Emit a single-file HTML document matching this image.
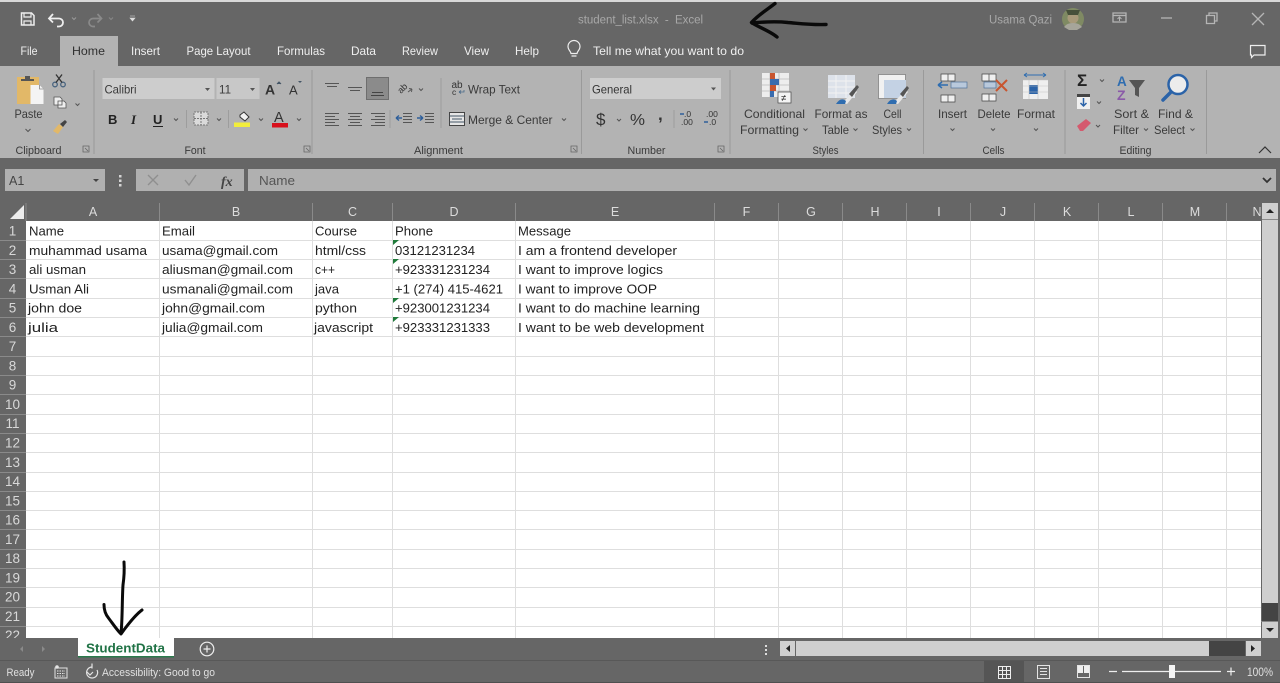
<!DOCTYPE html>
<html><head><meta charset="utf-8"><title>student_list.xlsx - Excel</title>
<style>
html,body{margin:0;padding:0;background:#666;width:1280px;height:683px;overflow:hidden}
svg{display:block;filter:blur(.3px)}
text{font-family:"Liberation Sans",sans-serif;white-space:pre}
.c text{font-size:13px;fill:#222}
.r text{font-size:11.7px;fill:#3a3a3a}
.l text{font-size:10.6px;fill:#3a3a3a}
.t text{font-size:12px;fill:#efefef}
.h text{font-size:12.5px;fill:#dcdcdc;text-anchor:middle}
.n text{font-size:13.5px;fill:#d8d8d8;text-anchor:middle}
.ch{fill:none;stroke:#555;stroke-width:1}
</style></head><body>
<svg width="1280" height="683" viewBox="0 0 1280 683" xmlns="http://www.w3.org/2000/svg">
<rect width="1280" height="683" fill="#666"/>
<rect width="1280" height="2" fill="#d8d8d8"/>

<!-- Title bar -->
<g fill="none" stroke="#eee" stroke-width="1.5">
<path d="M21.500 13h10l2.500 2.500v9.500h-12.500z"/><path d="M24 13v4h7v-4M24 25v-4h7v4" stroke-width="1.200"/>
<path d="M50 18.500h9a4 4 0 0 1 0 8h-2" stroke-width="1.800"/><path d="M53 14l-4 4.500 4 4" stroke-width="1.800"/>
</g>
<path d="M72 17.500l2 2 2-2" fill="none" stroke="#999"/>
<g fill="none" stroke="#8a8a8a" stroke-width="1.700"><path d="M101 18.500h-8a4 4 0 0 0 0 8h2"/><path d="M97.500 14l4 4.500-4 4"/></g>
<path d="M109 17.500l2 2 2-2" fill="none" stroke="#888"/>
<path d="M130 16h5M130 18h5l-2.500 3z" fill="#ddd" stroke="#ddd" stroke-width=".6"/>
<text x="578" y="23.500" font-size="11.500" fill="#a8a8a8" textLength="125" lengthAdjust="spacing">student_list.xlsx  -  Excel</text>
<text x="989" y="23.500" font-size="11.500" fill="#a8a8a8" textLength="63" lengthAdjust="spacingAndGlyphs">Usama Qazi</text>
<circle cx="1073" cy="19" r="11" fill="#7f8a63"/>
<circle cx="1073" cy="18" r="5.500" fill="#a89a7a"/><path d="M1064 27a10 7 0 0 1 18 0l-5 3h-8z" fill="#a6a59a"/><path d="M1066 10h14l-2 5h-10z" fill="#47513a"/>
<g fill="none" stroke="#b5b5b5" stroke-width="1.300">
<path d="M1113 13h13v9h-13z"/><path d="M1113 15.500h13"/><path d="M1119.500 21v-4m-2 2l2-2 2 2" stroke-width="1"/>
<path d="M1161 18h11"/>
<path d="M1206.500 15.500h8v8h-8z"/><path d="M1209 15.500v-2.500h8v8h-2.500"/>
<path d="M1252 13l12 12M1264 13l-12 12"/>
</g>

<!-- Tabs -->
<rect x="60" y="36" width="58" height="30" fill="#b3b3b3"/>
<g class="t">
<text x="20.500" y="55" textLength="17" lengthAdjust="spacingAndGlyphs">File</text>
<text x="72" y="55" textLength="33" lengthAdjust="spacingAndGlyphs" style="fill:#303030">Home</text>
<text x="131" y="55" textLength="29" lengthAdjust="spacingAndGlyphs">Insert</text>
<text x="186.500" y="55" textLength="64" lengthAdjust="spacingAndGlyphs">Page Layout</text>
<text x="277" y="55" textLength="48" lengthAdjust="spacingAndGlyphs">Formulas</text>
<text x="351" y="55" textLength="25" lengthAdjust="spacingAndGlyphs">Data</text>
<text x="402" y="55" textLength="36" lengthAdjust="spacingAndGlyphs">Review</text>
<text x="464" y="55" textLength="25" lengthAdjust="spacingAndGlyphs">View</text>
<text x="515" y="55" textLength="24" lengthAdjust="spacingAndGlyphs">Help</text>
<text x="593" y="55" textLength="151" lengthAdjust="spacingAndGlyphs">Tell me what you want to do</text>
</g>
<path d="M571 53.500c0-2-3-3.500-3-7a6 6 0 0 1 12 0c0 3.500-3 5-3 7zM571.500 56h5" fill="none" stroke="#eee" stroke-width="1.200"/>
<path d="M1250.500 45.500h14.500v9.500h-11l-2.500 2.500v-2.500h-1z" fill="none" stroke="#eee" stroke-width="1.200"/>

<!-- Ribbon -->
<rect x="0" y="66" width="1280" height="92" fill="#b3b3b3"/>
<g stroke="#9a9a9a" stroke-width="1"><path d="M94 70v84M312 70v84M581.500 70v84M730 70v84M923.500 70v84M1065 70v84M1206.500 70v84"/></g>

<!-- Clipboard -->
<rect x="17" y="77" width="22" height="27" fill="#e2b868"/>
<path d="M21 79h4v-3h5v3h4v2h-13z" fill="#555"/>
<path d="M30.500 85h9l4 4v15h-13z" fill="#f4f4f4"/><path d="M39.500 85v4h4" fill="none" stroke="#888" stroke-width=".8"/>
<g fill="none" stroke="#4a6580" stroke-width="1.300"><circle cx="55" cy="84.500" r="2.300"/><circle cx="63" cy="84.500" r="2.300"/></g><path d="M56 82.500l6-8M62 82.500l-6-8" stroke="#333" stroke-width="1.300"/>
<path d="M54 97h6l2 2v6h-8z M58 101h6l2 2v5h-8z" fill="#eee" stroke="#555" stroke-width=".8"/>
<path d="M75.500 103.500l2 2 2-2" class="ch"/>
<path d="M53 131l6-7 4 3-5 7z" fill="#e2b868"/><path d="M60 124l5-4 2 2-4 5z" fill="#444"/>
<g class="r"><text x="14.500" y="118" textLength="28" lengthAdjust="spacingAndGlyphs">Paste</text></g>
<g class="l">
<text x="15.500" y="154" textLength="46" lengthAdjust="spacingAndGlyphs">Clipboard</text>
<text x="184.500" y="154" textLength="21" lengthAdjust="spacingAndGlyphs">Font</text>
<text x="414" y="154" textLength="49" lengthAdjust="spacingAndGlyphs">Alignment</text>
<text x="627.500" y="154" textLength="38" lengthAdjust="spacingAndGlyphs">Number</text>
<text x="812.500" y="154" textLength="26" lengthAdjust="spacingAndGlyphs">Styles</text>
<text x="982.500" y="154" textLength="22" lengthAdjust="spacingAndGlyphs">Cells</text>
<text x="1119.500" y="154" textLength="32" lengthAdjust="spacingAndGlyphs">Editing</text>
</g>
<path d="M25.500 129l2.500 2.500 2.500-2.500" class="ch"/>
<g fill="none" stroke="#666" stroke-width=".8"><path d="M83 146h6v6h-6z M85 148l3 3"/><path d="M304 146h6v6h-6z M306 148l3 3"/><path d="M571 146h6v6h-6z M573 148l3 3"/><path d="M718 146h6v6h-6z M720 148l3 3"/></g>

<!-- Font -->
<rect x="102.500" y="78" width="112" height="21" fill="#cdcdcd"/>
<rect x="216.500" y="78" width="43" height="21" fill="#c8c8c8"/>
<g class="r"><text x="104.500" y="93.500" textLength="32" lengthAdjust="spacingAndGlyphs">Calibri</text><text x="219" y="93.500" textLength="12" lengthAdjust="spacingAndGlyphs">11</text></g>
<path d="M205 88h5l-2.500 3zM250 88h5l-2.500 3z" fill="#555"/>
<text x="265" y="94.500" font-size="14" font-weight="bold" fill="#333">A</text><path d="M277 84l2-2 2 2" fill="#456" stroke="#456"/>
<text x="289" y="94.500" font-size="13" fill="#333">A</text><path d="M298 81h4l-2 2z" fill="#456"/>
<text x="108" y="124" font-size="13" font-weight="bold" fill="#222">B</text>
<text x="131" y="124" font-size="13" font-weight="bold" font-style="italic" fill="#222" style="font-family:'Liberation Serif',serif">I</text>
<text x="153" y="124" font-size="13" font-weight="bold" fill="#222">U</text><path d="M153 126.500h10" stroke="#222" stroke-width="1"/>
<path d="M174 118.500l2 2 2-2M217 118.500l2 2 2-2M259 118.500l2 2 2-2M297 118.500l2 2 2-2" class="ch"/>
<path d="M186.500 110v18M228.500 110v18" stroke="#9d9d9d"/>
<rect x="194" y="112" width="14" height="13" fill="#dadada"/><path d="M194 112h14v13h-14zM201 112v13M194 118.500h14" fill="none" stroke="#777" stroke-width="1" stroke-dasharray="2 1"/>
<path d="M240 115l4-3 5 5-4 4-5-4z" fill="#f2f2f2" stroke="#333" stroke-width="1"/>
<rect x="234" y="122.500" width="16" height="4.500" fill="#f2ee3c"/>
<text x="274" y="122" font-size="14.500" fill="#333">A</text>
<rect x="272" y="123" width="16" height="4.500" fill="#d8101c"/>

<!-- Alignment -->
<g fill="none" stroke="#555" stroke-width="1">
<path d="M325 83.500h14M327 86.500h10"/><path d="M348 87.500h14M350 90.500h10"/>
<path d="M325 113.500h14M325 116.500h10M325 119.500h14M325 122.500h10M325 125.500h14"/>
<path d="M348 113.500h14M350 116.500h10M348 119.500h14M350 122.500h10M348 125.500h14"/>
<path d="M371 113.500h14M375 116.500h10M371 119.500h14M375 122.500h10M371 125.500h14"/>
<path d="M403 113.500h9M403 116.500h9M403 119.500h9M403 122.500h9"/><path d="M425 113.500h9M425 116.500h9M425 119.500h9M425 122.500h9"/>
<path d="M390 110v18M441 78v50" stroke="#9d9d9d"/>
<path d="M419 88.500l2 2 2-2"/>
</g>
<text x="0" y="0" font-size="9" fill="#333" transform="translate(401 94) rotate(-45)">ab</text>
<path d="M408 92l4-3M412 89l-3-.5M412 89l-.5 3" stroke="#555" fill="none" stroke-width=".9"/>
<rect x="366.500" y="77.500" width="22" height="22" fill="#8b8b8b" stroke="#6e6e6e"/>
<path d="M372 92.500h11M371 95.500h13" stroke="#444"/>
<path d="M396 118h6M396 118l3-2.500M396 118l3 2.500" stroke="#2f5f9a" stroke-width="1.400" fill="none"/>
<path d="M417 118h6M423 118l-3-2.500M423 118l-3 2.500" stroke="#2f5f9a" stroke-width="1.400" fill="none"/>

<text x="451.500" y="88" font-size="10" fill="#333">ab</text><text x="452" y="95" font-size="8.500" fill="#333">c</text><path d="M459 92h5v-2M459 92l2-1.500M459 92l2 1.500" stroke="#4a6b8a" fill="none" stroke-width=".8"/>
<g class="r"><text x="468" y="93.500" textLength="52" lengthAdjust="spacingAndGlyphs">Wrap Text</text><text x="468" y="124" textLength="84.500" lengthAdjust="spacingAndGlyphs">Merge &amp; Center</text></g>
<rect x="449.500" y="112.500" width="15" height="13" fill="#e6e6e6" stroke="#444"/><path d="M449.500 116h15M449.500 122h15M452 119h10" stroke="#456" fill="none" stroke-width=".9"/>
<path d="M562 118.500l2 2 2-2" class="ch"/>

<!-- Number -->
<rect x="590" y="78" width="131" height="21" fill="#cdcdcd"/>
<text x="592" y="93.500" font-size="11.700" fill="#333" textLength="40" lengthAdjust="spacingAndGlyphs">General</text>
<path d="M711 87.500h5l-2.500 3z" fill="#555"/>
<text x="596" y="125" font-size="17" fill="#333">$</text>
<path d="M617 119l2 2 2-2" class="ch"/>
<text x="630" y="125" font-size="16" fill="#333" textLength="15" lengthAdjust="spacingAndGlyphs">%</text>
<text x="658" y="120" font-size="17" font-weight="bold" fill="#333">,</text>
<path d="M674 110v18" stroke="#9d9d9d"/>
<g font-size="8.500" fill="#333"><text x="684" y="117">.0</text><text x="681" y="125">.00</text><text x="706" y="117">.00</text><text x="709" y="125">.0</text></g>
<path d="M680 114h4M704 122h4" stroke="#2f5f9a" stroke-width="1.500"/>

<!-- Styles -->
<rect x="762" y="73" width="27" height="24" fill="#ededed"/>
<path d="M762 79h27M762 85h27M762 91h27M770 73v24M779 73v24" stroke="#bbb" stroke-width=".8"/>
<rect x="770" y="73" width="5" height="6" fill="#c8552f"/><rect x="770" y="79" width="9" height="6" fill="#3a6cae"/><rect x="770" y="85" width="6" height="6" fill="#c8552f"/><rect x="770" y="91" width="4" height="6" fill="#3a6cae"/>
<rect x="778" y="92" width="13" height="11" fill="#f4f4f4" stroke="#444" stroke-width=".7"/><text x="781" y="101" font-size="9.500" fill="#222">≠</text>
<rect x="828" y="75" width="27" height="23" fill="#dde2ea"/><path d="M828 81h27M828 87h27M828 93h22M836 75v23M846 75v23" stroke="#f2f2f2" stroke-width="1"/>
<path d="M842 103l13-13 2 2-10 12z" fill="#e8e8e8"/><path d="M849 94l8-9 2 2-7 10z" fill="#555"/><path d="M836 104c3-5 7-6 10-3l-1 3z" fill="#2f6db0"/>
<rect x="878.500" y="74.500" width="27" height="24" fill="#f1f1f1" stroke="#777" stroke-width=".7"/><rect x="884" y="80" width="22" height="18" fill="#c4d2e4"/>
<path d="M893 103l13-13 2 2-10 12z" fill="#e8e8e8"/><path d="M900 94l7-8 2 2-6 9z" fill="#555"/><path d="M887 104c3-5 7-6 10-3l-1 3z" fill="#2f6db0"/>
<g class="r">
<text x="744" y="118" textLength="61" lengthAdjust="spacingAndGlyphs">Conditional</text>
<text x="740" y="134" textLength="59" lengthAdjust="spacingAndGlyphs">Formatting</text>
<text x="814.500" y="118" textLength="53" lengthAdjust="spacingAndGlyphs">Format as</text>
<text x="822" y="134" textLength="27" lengthAdjust="spacingAndGlyphs">Table</text>
<text x="883.500" y="118" textLength="18" lengthAdjust="spacingAndGlyphs">Cell</text>
<text x="872" y="134" textLength="30" lengthAdjust="spacingAndGlyphs">Styles</text>
</g>
<path d="M803.500 128.500l2 2 2-2M853.500 128.500l2 2 2-2M907 128.500l2 2 2-2" class="ch"/>

<!-- Cells -->
<g fill="#efefef" stroke="#444" stroke-width=".7"><path d="M941 74h14v7h-14z M941 95h14v7h-14z"/><path d="M982 74h14v7h-14z M982 94h14v7h-14z"/></g>
<path d="M948 74v7M948 95v7M989 74v7M989 94v7" stroke="#444" stroke-width=".7"/>
<rect x="951" y="82" width="16" height="6" fill="#b9c9dc" stroke="#4f7199" stroke-width=".7"/>
<path d="M938 85h10M938 85l4-3M938 85l4 3" stroke="#2f6db0" stroke-width="1.500" fill="none"/>
<rect x="984" y="82" width="12" height="6" fill="#b9c9dc" stroke="#4f7199" stroke-width=".7"/>
<path d="M996 80l11 11M1007 80l-11 11" stroke="#c8552f" stroke-width="2"/>
<rect x="1023" y="80" width="25" height="19" fill="#efefef"/><rect x="1029" y="85" width="9" height="9" fill="#2b63a8"/>
<path d="M1023 80h25M1023 86h25M1023 92h25M1029 80v19M1038 80v19" stroke="#c2c2c2" stroke-width=".6"/>
<path d="M1024 75h22M1024 75l3-2M1024 75l3 2M1046 75l-3-2M1046 75l-3 2" stroke="#2f6db0" fill="none"/>
<g class="r">
<text x="938" y="118" textLength="29" lengthAdjust="spacingAndGlyphs">Insert</text>
<text x="977.500" y="118" textLength="33" lengthAdjust="spacingAndGlyphs">Delete</text>
<text x="1017" y="118" textLength="38" lengthAdjust="spacingAndGlyphs">Format</text>
</g>
<path d="M950.500 128.500l2 2 2-2M991 128.500l2 2 2-2M1034 128.500l2 2 2-2" class="ch"/>

<!-- Editing -->
<text x="1077" y="86" font-size="17" font-weight="bold" fill="#222">Σ</text>
<path d="M1100 79.500l2 2 2-2M1097 101.500l2 2 2-2M1096 125l2 2 2-2M1144 128.500l2 2 2-2M1190.500 128.500l2 2 2-2" class="ch"/>
<rect x="1077" y="95" width="13" height="14" fill="#f0f0f0"/><rect x="1077" y="94" width="13" height="3" fill="#444"/>
<path d="M1083.500 98v8m-3-3l3 3 3-3" stroke="#2b63a8" stroke-width="1.500" fill="none"/>
<path d="M1077 126l9-7 5 4-8 8h-3z" fill="#d45a6e"/>
<text x="1117" y="86" font-size="13.500" font-weight="bold" fill="#2f6db0">A</text>
<text x="1117" y="100" font-size="14" font-weight="bold" fill="#8a5aa8">Z</text>
<path d="M1129 80h16l-6 8v9l-4-2v-7z" fill="#555"/>
<circle cx="1178" cy="84.500" r="9.500" fill="#ececec" stroke="#2b63a8" stroke-width="2.500"/>
<path d="M1171 92l-8 8" stroke="#2b63a8" stroke-width="3.500" stroke-linecap="round"/>
<g class="r">
<text x="1114" y="118" textLength="35" lengthAdjust="spacingAndGlyphs">Sort &amp;</text>
<text x="1113" y="134" textLength="26" lengthAdjust="spacingAndGlyphs">Filter</text>
<text x="1158" y="118" textLength="35" lengthAdjust="spacingAndGlyphs">Find &amp;</text>
<text x="1154" y="134" textLength="31" lengthAdjust="spacingAndGlyphs">Select</text>
</g>
<path d="M1259 153l6-6 6 6" fill="none" stroke="#333" stroke-width="1.200"/>

<!-- Formula bar -->
<rect x="5" y="169" width="100" height="22" fill="#b0b0b0"/>
<text x="9" y="185" font-size="12.500" fill="#444">A1</text>
<path d="M93 179h6l-3 3z" fill="#444"/>
<g fill="#d5d5d5"><rect x="119" y="175" width="2.500" height="2.500"/><rect x="119" y="179.500" width="2.500" height="2.500"/><rect x="119" y="184" width="2.500" height="2.500"/></g>
<rect x="136" y="169" width="108" height="22" fill="#b0b0b0"/>
<rect x="248" y="169" width="1028" height="22" fill="#b0b0b0"/>
<path d="M148 175l10 10M158 175l-10 10" stroke="#8f8f8f" stroke-width="1.400"/>
<path d="M185 180l4 5 7-10" stroke="#8f8f8f" stroke-width="1.400" fill="none"/>
<text x="221" y="186" font-size="14" font-style="italic" font-weight="bold" fill="#444" style="font-family:'Liberation Serif',serif">fx</text>
<text x="259" y="185" font-size="13" fill="#555" textLength="36" lengthAdjust="spacingAndGlyphs">Name</text>
<path d="M1263 178l4 4 4-4" fill="none" stroke="#333" stroke-width="1.800"/>

<!-- Grid -->
<rect x="26" y="221" width="1235" height="417" fill="#fff"/>
<path fill="none" stroke="#dedede" stroke-width="1" d="M26 240.500H1261M26 259.500H1261M26 278.500H1261M26 298.500H1261M26 317.500H1261M26 336.500H1261M26 356.500H1261M26 375.500H1261M26 394.500H1261M26 414.500H1261M26 433.500H1261M26 452.500H1261M26 472.500H1261M26 491.500H1261M26 510.500H1261M26 529.500H1261M26 549.500H1261M26 568.500H1261M26 587.500H1261M26 607.500H1261M26 626.500H1261"/>
<path fill="none" stroke="#dedede" stroke-width="1" d="M159.500 221V638M312.500 221V638M392.500 221V638M515.500 221V638M714.500 221V638M778.500 221V638M842.500 221V638M906.500 221V638M970.500 221V638M1034.500 221V638M1098.500 221V638M1162.500 221V638M1226.500 221V638"/>

<!-- Column headers -->
<path d="M26 203v18M159.500 203v18M312.500 203v18M392.500 203v18M515.500 203v18M714.500 203v18M778.500 203v18M842.500 203v18M906.500 203v18M970.500 203v18M1034.500 203v18M1098.500 203v18M1162.500 203v18M1226.500 203v18" stroke="#8a8a8a" fill="none"/>
<path d="M24 205v14H10z" fill="#ececec"/>
<g class="h">
<text x="93" y="216">A</text><text x="236" y="216">B</text><text x="352.500" y="216">C</text><text x="454" y="216">D</text><text x="615" y="216">E</text><text x="746.500" y="216">F</text><text x="811" y="216">G</text><text x="875" y="216">H</text><text x="939" y="216">I</text><text x="1003" y="216">J</text><text x="1067" y="216">K</text><text x="1131" y="216">L</text><text x="1195" y="216">M</text><text x="1257" y="216">N</text>
</g>
<!-- Row headers -->
<path fill="none" stroke="#8a8a8a" d="M0 240.500H26M0 259.500H26M0 278.500H26M0 298.500H26M0 317.500H26M0 336.500H26M0 356.500H26M0 375.500H26M0 394.500H26M0 414.500H26M0 433.500H26M0 452.500H26M0 472.500H26M0 491.500H26M0 510.500H26M0 529.500H26M0 549.500H26M0 568.500H26M0 587.500H26M0 607.500H26M0 626.500H26"/>
<g class="n">
<text x="12.500" y="235.500">1</text><text x="12.500" y="255">2</text><text x="12.500" y="274">3</text><text x="12.500" y="293.500">4</text><text x="12.500" y="312.500">5</text><text x="12.500" y="332">6</text><text x="12.500" y="351">7</text><text x="12.500" y="370.500">8</text><text x="12.500" y="389.500">9</text><text x="12.500" y="409">10</text><text x="12.500" y="428">11</text><text x="12.500" y="447.500">12</text><text x="12.500" y="467">13</text><text x="12.500" y="486">14</text><text x="12.500" y="505.500">15</text><text x="12.500" y="524.500">16</text><text x="12.500" y="544">17</text><text x="12.500" y="563">18</text><text x="12.500" y="582.500">19</text><text x="12.500" y="601.500">20</text><text x="12.500" y="621">21</text><text x="12.500" y="640">22</text>
</g>

<!-- Cells text -->
<g class="c">
<text x="29" y="235.500" textLength="35" lengthAdjust="spacingAndGlyphs">Name</text>
<text x="162" y="235.500" textLength="33" lengthAdjust="spacingAndGlyphs">Email</text>
<text x="315" y="235.500" textLength="42" lengthAdjust="spacingAndGlyphs">Course</text>
<text x="395" y="235.500" textLength="38" lengthAdjust="spacingAndGlyphs">Phone</text>
<text x="518" y="235.500" textLength="53" lengthAdjust="spacingAndGlyphs">Message</text>

<text x="29" y="255" textLength="118" lengthAdjust="spacingAndGlyphs">muhammad usama</text>
<text x="162" y="255" textLength="116" lengthAdjust="spacingAndGlyphs">usama@gmail.com</text>
<text x="315" y="255" textLength="51" lengthAdjust="spacingAndGlyphs">html/css</text>
<text x="395" y="255" textLength="80" lengthAdjust="spacingAndGlyphs">03121231234</text>
<text x="518" y="255" textLength="159" lengthAdjust="spacingAndGlyphs">I am a frontend developer</text>

<text x="29" y="274" textLength="57" lengthAdjust="spacingAndGlyphs">ali usman</text>
<text x="162" y="274" textLength="131" lengthAdjust="spacingAndGlyphs">aliusman@gmail.com</text>
<text x="315" y="274" textLength="20" lengthAdjust="spacingAndGlyphs">c++</text>
<text x="395" y="274" textLength="95" lengthAdjust="spacingAndGlyphs">+923331231234</text>
<text x="518" y="274" textLength="145" lengthAdjust="spacingAndGlyphs">I want to improve logics</text>

<text x="29" y="293.500" textLength="60" lengthAdjust="spacingAndGlyphs">Usman Ali</text>
<text x="162" y="293.500" textLength="131" lengthAdjust="spacingAndGlyphs">usmanali@gmail.com</text>
<text x="315" y="293.500" textLength="24" lengthAdjust="spacingAndGlyphs">java</text>
<text x="395" y="293.500" textLength="108" lengthAdjust="spacingAndGlyphs">+1 (274) 415-4621</text>
<text x="518" y="293.500" textLength="139" lengthAdjust="spacingAndGlyphs">I want to improve OOP</text>

<text x="28" y="312.500" textLength="54" lengthAdjust="spacingAndGlyphs">john doe</text>
<text x="162" y="312.500" textLength="103" lengthAdjust="spacingAndGlyphs">john@gmail.com</text>
<text x="315" y="312.500" textLength="42" lengthAdjust="spacingAndGlyphs">python</text>
<text x="395" y="312.500" textLength="95" lengthAdjust="spacingAndGlyphs">+923001231234</text>
<text x="518" y="312.500" textLength="182" lengthAdjust="spacingAndGlyphs">I want to do machine learning</text>

<text x="28" y="332" textLength="30" lengthAdjust="spacingAndGlyphs">julia</text>
<text x="162" y="332" textLength="101" lengthAdjust="spacingAndGlyphs">julia@gmail.com</text>
<text x="314" y="332" textLength="59" lengthAdjust="spacingAndGlyphs">javascript</text>
<text x="395" y="332" textLength="95" lengthAdjust="spacingAndGlyphs">+923331231333</text>
<text x="518" y="332" textLength="186" lengthAdjust="spacingAndGlyphs">I want to be web development</text>
</g>
<g fill="#1f7a3a"><path d="M393 240h6l-6 5zM393 259h6l-6 5zM393 298h6l-6 5zM393 317h6l-6 5z"/></g>

<!-- Vertical scrollbar -->
<rect x="1262" y="203" width="16" height="435" fill="#cfcfcf"/>
<rect x="1262" y="219" width="16" height="1" fill="#8a8a8a"/>
<rect x="1262" y="603" width="16" height="19" fill="#444"/>
<path d="M1266 213h8l-4-4z" fill="#222"/>
<path d="M1266 628h8l-4 4z" fill="#222"/>
<rect x="1261" y="621" width="17" height="1" fill="#888"/>

<!-- Bottom bars -->
<rect x="0" y="638" width="1280" height="22" fill="#666"/>
<rect x="0" y="660" width="1280" height="1" fill="#585858"/>
<path d="M23 646v6l-3-3zM42 646v6l3-3z" fill="#8a8a8a"/>
<rect x="78" y="638" width="96" height="19" fill="#fff"/>
<rect x="78" y="656" width="96" height="1.500" fill="#2a7a4c"/>
<text x="86" y="652.500" font-size="13" font-weight="bold" fill="#217346" textLength="79" lengthAdjust="spacingAndGlyphs">StudentData</text>
<circle cx="207" cy="649" r="6.800" fill="none" stroke="#eee" stroke-width="1.200"/><path d="M203.500 649h7M207 645.500v7" stroke="#eee" stroke-width="1.200"/>
<g fill="#ddd"><rect x="765" y="645" width="2" height="2"/><rect x="765" y="649" width="2" height="2"/><rect x="765" y="653" width="2" height="2"/></g>
<rect x="780" y="641" width="15" height="15" fill="#d0d0d0"/><path d="M790 645v7l-4-3.500z" fill="#222"/>
<rect x="796" y="641" width="413" height="15" fill="#cfcfcf"/>
<rect x="1209" y="641" width="36" height="15" fill="#444"/>
<rect x="1246" y="641" width="15" height="15" fill="#d0d0d0"/><path d="M1251 645v7l4-3.500z" fill="#222"/>

<!-- Status bar -->
<text x="6.500" y="676" font-size="11" fill="#e0e0e0" textLength="28" lengthAdjust="spacingAndGlyphs">Ready</text>
<rect x="55" y="668" width="12" height="10" fill="none" stroke="#e4e4e4"/><path d="M57 671h8M57 673.500h8M57 676h8" stroke="#e4e4e4" stroke-dasharray="1.500 1"/><circle cx="57" cy="667" r="1.800" fill="#e4e4e4"/>
<path d="M92 667a5.500 5.500 0 1 0 5 3M87 672l3 3 3-3M92 663.500v5" fill="none" stroke="#e4e4e4" stroke-width="1.200"/>
<text x="102" y="676" font-size="11" fill="#e0e0e0" textLength="113" lengthAdjust="spacingAndGlyphs">Accessibility: Good to go</text>
<rect x="984" y="661" width="40" height="22" fill="#555"/>
<path d="M998.500 666.500h12v12h-12zM1002.500 666.500v12M1006.500 666.500v12M998.500 670.500h12M998.500 674.500h12" fill="none" stroke="#eee"/>
<rect x="1037.500" y="665.500" width="12" height="13" fill="none" stroke="#e4e4e4"/><path d="M1040 668.500h7M1040 671.500h7M1040 674.500h7" stroke="#e4e4e4"/>
<rect x="1077.500" y="665.500" width="12" height="12" fill="none" stroke="#e4e4e4"/><rect x="1078" y="666" width="5" height="7" fill="#eee"/><rect x="1084" y="666" width="5" height="7" fill="#eee"/>
<path d="M1109 671.500h8M1122 671.500h99M1227 671.500h8M1231 667.500v8" stroke="#eee" stroke-width="1.200"/>
<rect x="1169" y="665" width="6" height="13" fill="#f4f4f4"/>
<text x="1247" y="676" font-size="12" fill="#e0e0e0" textLength="26" lengthAdjust="spacingAndGlyphs">100%</text>

<!-- Hand-drawn arrows -->
<g fill="none" stroke="#0a0a0a" stroke-linecap="round" stroke-linejoin="round">
<path d="M826 24.500C810 25 800 23.500 788 22.500C775 21 762 22 752 23" stroke-width="3.400"/>
<path d="M775 3.500C768 9 758 15 751.500 22.500C758 27 770 31 777 37" stroke-width="3.400"/>
<path d="M124 562C124.500 570 124 578 123 585C122 600 122.500 620 121 633" stroke-width="3"/>
<path d="M104 604.500C104 611 106 615 108.500 618C113 624 117 630 121 634C126 627 134 616 142 610" stroke-width="3"/>
</g>
<rect x="0" y="682" width="1280" height="1" fill="#4f4f4f"/>
</svg>
</body></html>
